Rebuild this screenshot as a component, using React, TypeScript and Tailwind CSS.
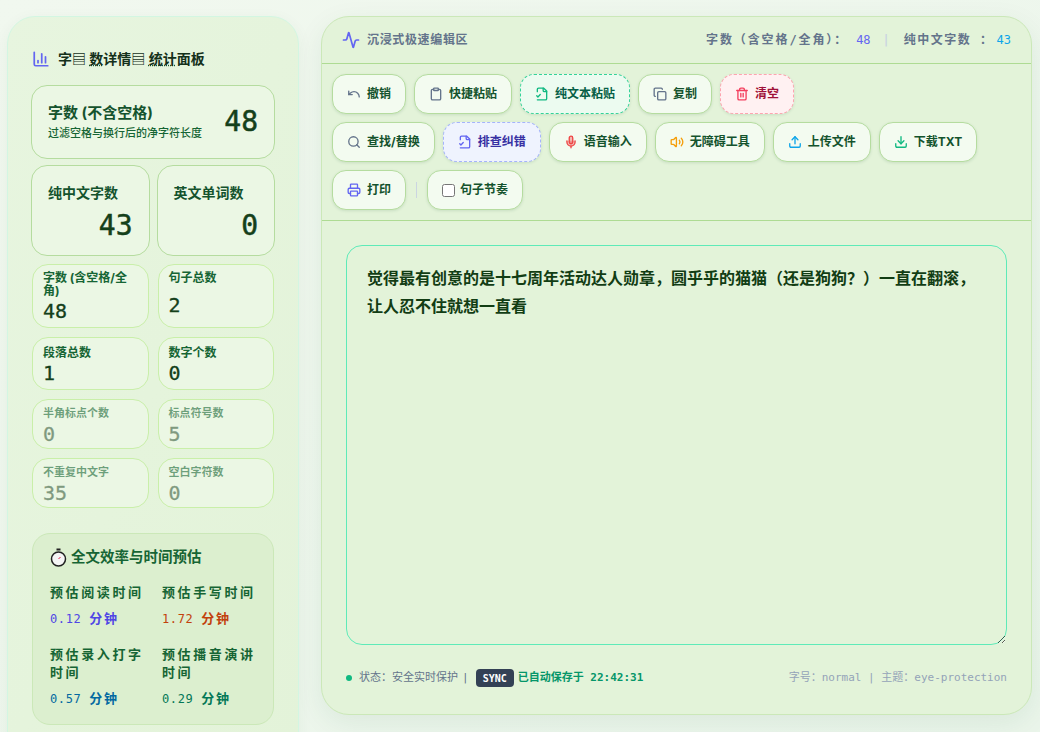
import React from "react";
import { Undo, Clipboard, Copy, Trash2, Search, Mic, Volume2, Upload, Download, Printer, Activity, ChartColumn } from "lucide-react";

const SANS = "font-['Inter','Noto_Sans_CJK_SC',sans-serif]";
const MONO = "font-['DejaVu_Sans_Mono','Noto_Sans_CJK_SC',monospace]";
const SW = 2.3;

function FileCheckIcon() {
  return (
    <svg width="14" height="14" viewBox="0 0 24 24" fill="none" stroke="currentColor" strokeWidth={SW} strokeLinecap="round" strokeLinejoin="round">
      <path d="M4 22h14a2 2 0 0 0 2-2V7l-5-5H6a2 2 0 0 0-2 2v4" />
      <path d="M14 2v4a2 2 0 0 0 2 2h4" />
      <path d="m3 15 2 2 4-4" />
    </svg>
  );
}

function Btn({ icon, label, tone = "normal", iconClass }: { icon: React.ReactNode; label: string; tone?: "normal" | "teal" | "indigo" | "red"; iconClass?: string }) {
  const tones = {
    normal: "border border-[#b5dc9f] bg-[#f3fbf0] text-[#14532d]",
    teal: "border border-dashed border-[#34d399] bg-[#ecfbf0] text-[#065f46]",
    indigo: "border border-dashed border-[#a5b4fc] bg-[#eff3fe] text-[#3730a3]",
    red: "border border-dashed border-[#fda4af] bg-[#fff1f2] text-[#9f1239]",
  };
  return (
    <button className={`h-10 flex items-center gap-1.5 px-3.5 rounded-[14px] text-xs font-bold shadow-[0_1px_3px_rgba(20,83,45,0.12)] ${tones[tone]}`}>
      <span className={`flex ${iconClass ?? ""}`}>{icon}</span>
      {label}
    </button>
  );
}

function BigCard({ label, value }: { label: string; value: string }) {
  return (
    <div className="h-[91px] rounded-2xl border border-[#b5dc9f] bg-[#ebf7e4] px-4 pt-[17px]">
      <div className="text-sm leading-5 font-bold text-[#14532d]">{label}</div>
      <div className={`text-right text-[28px] leading-9 mt-[5px] [-webkit-text-stroke:0.5px_#14401a] text-[#14401a] ${MONO}`}>{value}</div>
    </div>
  );
}

function Small({ label, value, h, muted, tall }: { label: string; value: string; h: string; muted?: boolean; tall?: boolean }) {
  const pad = muted ? "pt-[7px] pb-1" : tall ? "pt-1.5 pb-2" : "pt-2 pb-[5px]";
  return (
    <div className={`flex flex-col justify-between rounded-2xl border border-[#c9efa9] bg-[#ebf7e4] pl-[10px] pr-2 ${pad} ${h}`}>
      <div className={`leading-[13px] ${muted ? "text-[11px] font-semibold text-[#166534]/60" : "text-xs font-bold text-[#166534]"}`}>{label}</div>
      <div className={`text-[20px] leading-7 [-webkit-text-stroke:0.3px_currentColor] text-[#14401a] ${muted ? "opacity-50" : ""} ${MONO}`}>{value}</div>
    </div>
  );
}

function Est({ label, value, unit, color }: { label: string; value: string; unit: string; color: string }) {
  return (
    <div className="flex flex-col justify-start">
      <div className="text-[13px] leading-[18px] font-bold tracking-[2.6px] text-[#166534]">{label}</div>
      <div className={`mt-2 text-xs leading-5 tracking-[0.6px] ${color} ${MONO}`}>
        {value} <span className="font-bold text-[13px] tracking-[1.8px]">{unit}</span>
      </div>
    </div>
  );
}

export default function App() {
  return (
    <div className={`h-[732px] overflow-hidden bg-gradient-to-br from-[#f1f8ef] to-[#eaf5ea] flex items-start pl-[7px] pt-4 gap-[22px] ${SANS}`}>
      <aside className="w-[292px] shrink-0 h-[760px] rounded-[28px] border border-[#d3f6e2] bg-gradient-to-br from-[#e7f5df] to-[#e3f3d9] pt-8 px-[23px] shadow-[0_4px_16px_rgba(20,83,45,0.05)]">
        <h2 className="flex items-center gap-2 h-5 text-sm font-bold text-[#14301a] pl-px">
          <ChartColumn size={18} strokeWidth={SW} className="text-[#6366f1]" />
          <span className="whitespace-pre">字▤ <span className="underline decoration-dotted underline-offset-1 decoration-[#14532d]">数</span>详情▤ <span className="underline decoration-dotted underline-offset-1 decoration-[#14532d]">统计</span>面板</span>
        </h2>
        <div className="mt-4 h-[74px] rounded-2xl border border-[#b5dc9f] bg-[#ebf7e4] px-4 flex items-center justify-between">
          <div>
            <div className="text-[15px] leading-5 font-bold text-[#14532d]">字数 (不含空格)</div>
            <div className="text-[11px] leading-4 mt-0.5 font-medium text-[#166534]">过滤空格与换行后的净字符长度</div>
          </div>
          <div className={`text-[28px] [-webkit-text-stroke:0.5px_#14401a] text-[#14401a] ${MONO}`}>48</div>
        </div>
        <div className="mt-1.5 grid grid-cols-2 gap-[7px]">
          <BigCard label="纯中文字数" value="43" />
          <BigCard label="英文单词数" value="0" />
        </div>
        <div className="mt-2 mx-px grid grid-cols-2 gap-[9px]">
          <Small label="字数 (含空格/全角)" value="48" h="h-16" tall />
          <Small label="句子总数" value="2" h="h-16" tall />
          <Small label="段落总数" value="1" h="h-[53px]" />
          <Small label="数字个数" value="0" h="h-[53px]" />
          <Small label="半角标点个数" value="0" h="h-[50px]" muted />
          <Small label="标点符号数" value="5" h="h-[50px]" muted />
          <Small label="不重复中文字" value="35" h="h-[50px]" muted />
          <Small label="空白字符数" value="0" h="h-[50px]" muted />
        </div>
        <section className="mt-[25px] mx-px h-[192px] rounded-[18px] border border-[#cbe8b8] bg-[#dcefcf] pl-[17px] pr-4 pt-3">
          <h3 className="flex items-center gap-1 text-[14.5px] leading-[22px] font-bold text-[#166534]">
            <svg width="17" height="19" viewBox="0 0 17 19" className="shrink-0">
              <rect x="6.5" y="0.5" width="4" height="2" fill="#222" />
              <circle cx="8.5" cy="11" r="7" fill="#f5f5f5" stroke="#222" strokeWidth="1.5" />
              <path d="M8.5 11l2-2" stroke="#e11d48" strokeWidth="1" />
            </svg>
            全文效率与时间预估
          </h3>
          <div className="mt-[15px] grid grid-cols-2 gap-x-[17px] gap-y-4">
            <Est label="预估阅读时间" value="0.12" unit="分钟" color="text-[#4f46e5]" />
            <Est label="预估手写时间" value="1.72" unit="分钟" color="text-[#c2410c]" />
            <Est label="预估录入打字时间" value="0.57" unit="分钟" color="text-[#0369a1]" />
            <Est label="预估播音演讲时间" value="0.29" unit="分钟" color="text-[#047857]" />
          </div>
        </section>
      </aside>

      <main className="w-[711px] h-[699px] shrink-0 rounded-[28px] border border-[#cbe8b8] bg-[#e3f3d9] shadow-[0_8px_28px_rgba(20,83,45,0.08)] flex flex-col overflow-hidden">
        <header className="h-[47px] shrink-0 border-b border-[#aedb93] flex items-center justify-between pl-5 pr-5">
          <div className="flex items-center gap-[7px] text-xs font-bold tracking-[0.65px] text-[#64748b]">
            <Activity size={18} strokeWidth={SW} className="text-[#6366f1]" />
            沉浸式极速编辑区
          </div>
          <div className={`flex items-center text-xs font-bold text-[#64748b] ${MONO}`}>
            <span className="tracking-[1.9px]">字数（含空格/全角）：</span>
            <span className="text-[#6366f1] ml-2 font-normal">48</span>
            <span className="ml-3 mr-[14px] text-[#cbd5e1]">|</span>
            <span className="tracking-[1.5px]">纯中文字数 ：</span>
            <span className="text-[#0ea5e9] ml-[3px] font-normal">43</span>
          </div>
        </header>
        <div className="h-[157px] shrink-0 border-b border-[#aedb93] pt-2.5 pl-2.5 flex flex-col gap-2">
          <div className="flex gap-2">
            <Btn icon={<Undo size={14} strokeWidth={SW} />} label="撤销" iconClass="text-[#64748b]" />
            <Btn icon={<Clipboard size={14} strokeWidth={SW} />} label="快捷粘贴" iconClass="text-[#64748b]" />
            <Btn icon={<FileCheckIcon />} label="纯文本粘贴" tone="teal" iconClass="text-[#10b981]" />
            <Btn icon={<Copy size={14} strokeWidth={SW} />} label="复制" iconClass="text-[#64748b]" />
            <Btn icon={<Trash2 size={14} strokeWidth={SW} />} label="清空" tone="red" iconClass="text-[#f43f5e]" />
          </div>
          <div className="flex gap-2">
            <Btn icon={<Search size={14} strokeWidth={SW} />} label="查找/替换" iconClass="text-[#64748b]" />
            <Btn icon={<FileCheckIcon />} label="排查纠错" tone="indigo" iconClass="text-[#6366f1]" />
            <Btn icon={<Mic size={14} strokeWidth={SW} fill="currentColor" fillOpacity={0.35} />} label="语音输入" iconClass="text-[#ef4444]" />
            <Btn icon={<Volume2 size={14} strokeWidth={SW} />} label="无障碍工具" iconClass="text-[#f59e0b]" />
            <Btn icon={<Upload size={14} strokeWidth={SW} />} label="上传文件" iconClass="text-[#0ea5e9]" />
            <Btn icon={<Download size={14} strokeWidth={SW} />} label="下载TXT" iconClass="text-[#10b981]" />
          </div>
          <div className="flex items-center">
            <Btn icon={<Printer size={14} strokeWidth={SW} />} label="打印" iconClass="text-[#6366f1]" />
            <span className="mx-2.5 w-px h-4 bg-[#cbd5e1]" />
            <label className="h-10 flex items-center gap-[5px] px-3.5 rounded-[14px] text-xs font-bold border border-[#b5dc9f] bg-[#f3fbf0] text-[#14532d] shadow-[0_1px_3px_rgba(20,83,45,0.12)]">
              <input type="checkbox" className="w-[13px] h-[13px]" />
              句子节奏
            </label>
          </div>
        </div>
        <div className="px-6 pt-6">
          <textarea
            readOnly
            className="block w-[661px] h-[400px] rounded-2xl border-[1.5px] border-[#5eeab8] bg-[#e3f3d9] px-5 py-[18px] text-base leading-[28px] font-bold text-[#123d14] outline-none resize-y"
            value="觉得最有创意的是十七周年活动达人勋章，圆乎乎的猫猫（还是狗狗？）一直在翻滚，让人忍不住就想一直看"
          />
        </div>
        <footer className={`mt-6 px-6 flex items-center justify-between text-[11px] ${MONO}`}>
          <div className="flex items-center text-[#64748b]">
            <span className="w-[6px] h-[6px] rounded-full bg-[#10b981] mr-[7px]" />
            状态：安全实时保护 <span className="mx-1">|</span>
            <span className="ml-[3px] px-[7px] h-[18px] flex items-center rounded bg-[#334155] text-white font-bold text-[10px]">SYNC</span>
            <span className="ml-1 font-bold text-[#059669]">已自动保存于 22:42:31</span>
          </div>
          <div className="text-[#94a3b8]">字号：normal | 主题：eye-protection</div>
        </footer>
      </main>
    </div>
  );
}
